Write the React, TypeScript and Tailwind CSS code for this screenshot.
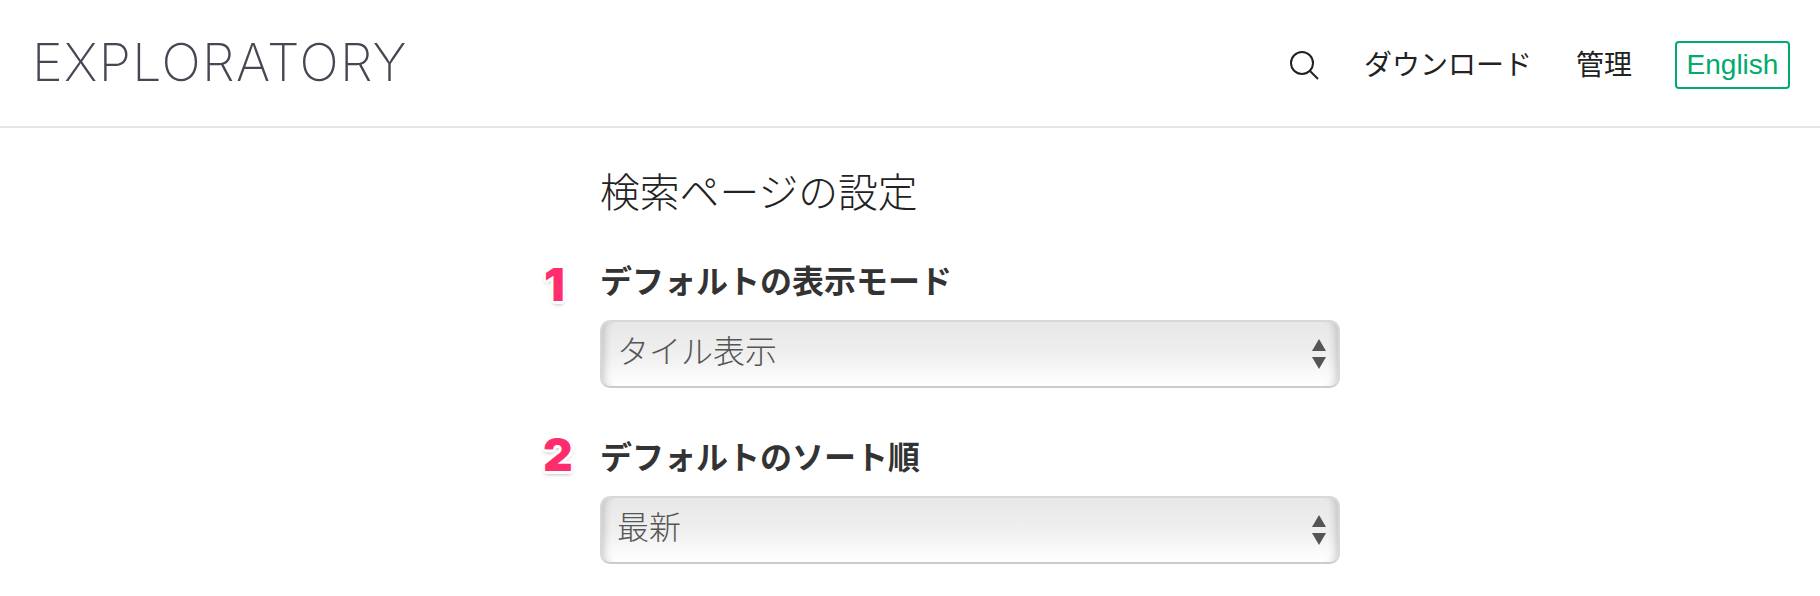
import React from 'react';

const cjk = "font-['Liberation_Sans','Noto_Sans_CJK_JP',sans-serif]";

const SelectBox = ({ value }: { value: string }) => {
  return (
    <div className="relative h-[68px] w-[740px]">
      <select
        defaultValue={value}
        className="h-full w-full appearance-none rounded-[10px] border-2 border-[#d8d8d8] border-b-[#cccccc] bg-gradient-to-b from-[#e8e8e8] via-[#efefef] to-white pb-[5px] pl-[15px] text-[32px] font-light text-[#555555] shadow-[inset_10px_0_8px_-8px_rgba(0,0,0,0.2),inset_-10px_0_8px_-8px_rgba(0,0,0,0.2)] outline-none"
      >
        <option>{value}</option>
      </select>
      <svg className="absolute right-[13px] top-[19px]" width="16" height="30" viewBox="0 0 16 30">
        <path d="M8 0 L15 12 L1 12 Z" fill="#555555" />
        <path d="M1 18 L15 18 L8 30 Z" fill="#555555" />
      </svg>
    </div>
  );
};

const Field = ({ num, numClass, label, value }: { num: string; numClass: string; label: string; value: string }) => {
  return (
    <div className="relative">
      <span
        className={`absolute font-['Inter',sans-serif] text-[46px] font-black leading-none text-[#ff2d6e] [text-shadow:2px_0_0_#fff,-2px_0_0_#fff,0_2px_0_#fff,0_-2px_0_#fff,-2px_2px_0_#fff,2px_2px_0_#fff,-2px_-2px_0_#fff,2px_-2px_0_#fff,0_3px_0_#fff,0_3px_4px_rgba(0,0,0,0.35)] ${numClass}`}
      >
        {num}
      </span>
      <h3 className="mb-[18px] h-[40px] text-[32px] font-bold leading-[40px] text-[#333333]">{label}</h3>
      <SelectBox value={value} />
    </div>
  );
};

export default function App() {
  return (
    <div className={`h-[596px] w-[1820px] overflow-hidden bg-white ${cjk}`}>
      <header className="flex h-[128px] items-center justify-between border-b-2 border-[#e6e6e6] pl-[32px] pr-[30px]">
        <div className="font-['Inter',sans-serif] text-[52px] font-[200] leading-none tracking-[1.4px] text-[#4a4553]">
          EXPLORATORY
        </div>
        <nav className="mt-[6px] flex items-center text-[28px] font-normal text-[#222222]">
          <svg className="mr-[45px] -mt-[2px]" width="30" height="30" viewBox="0 0 30 30" fill="none" stroke="#222222" strokeWidth="2">
            <circle cx="13" cy="13" r="11" />
            <path d="M21 21 L29 29" />
          </svg>
          <a className="mr-[44px]">ダウンロード</a>
          <a className="mr-[43px]">管理</a>
          <a className="-mt-[2px] flex h-[48px] w-[115px] items-center justify-center rounded-[4px] border-2 border-[#00ab6c] text-[28px] font-normal text-[#00ab6c]">
            English
          </a>
        </nav>
      </header>
      <main className="pl-[600px] pt-[40px]">
        <h2 className="mb-[44px] text-[39.8px] font-light leading-[50px] text-[#222222]">検索ページの設定</h2>
        <div className="flex flex-col gap-[50px]">
          <Field num="1" numClass="left-[-56px] top-[-1px]" label="デフォルトの表示モード" value="タイル表示" />
          <Field num="2" numClass="left-[-57px] top-[-7px]" label="デフォルトのソート順" value="最新" />
        </div>
      </main>
    </div>
  );
}
